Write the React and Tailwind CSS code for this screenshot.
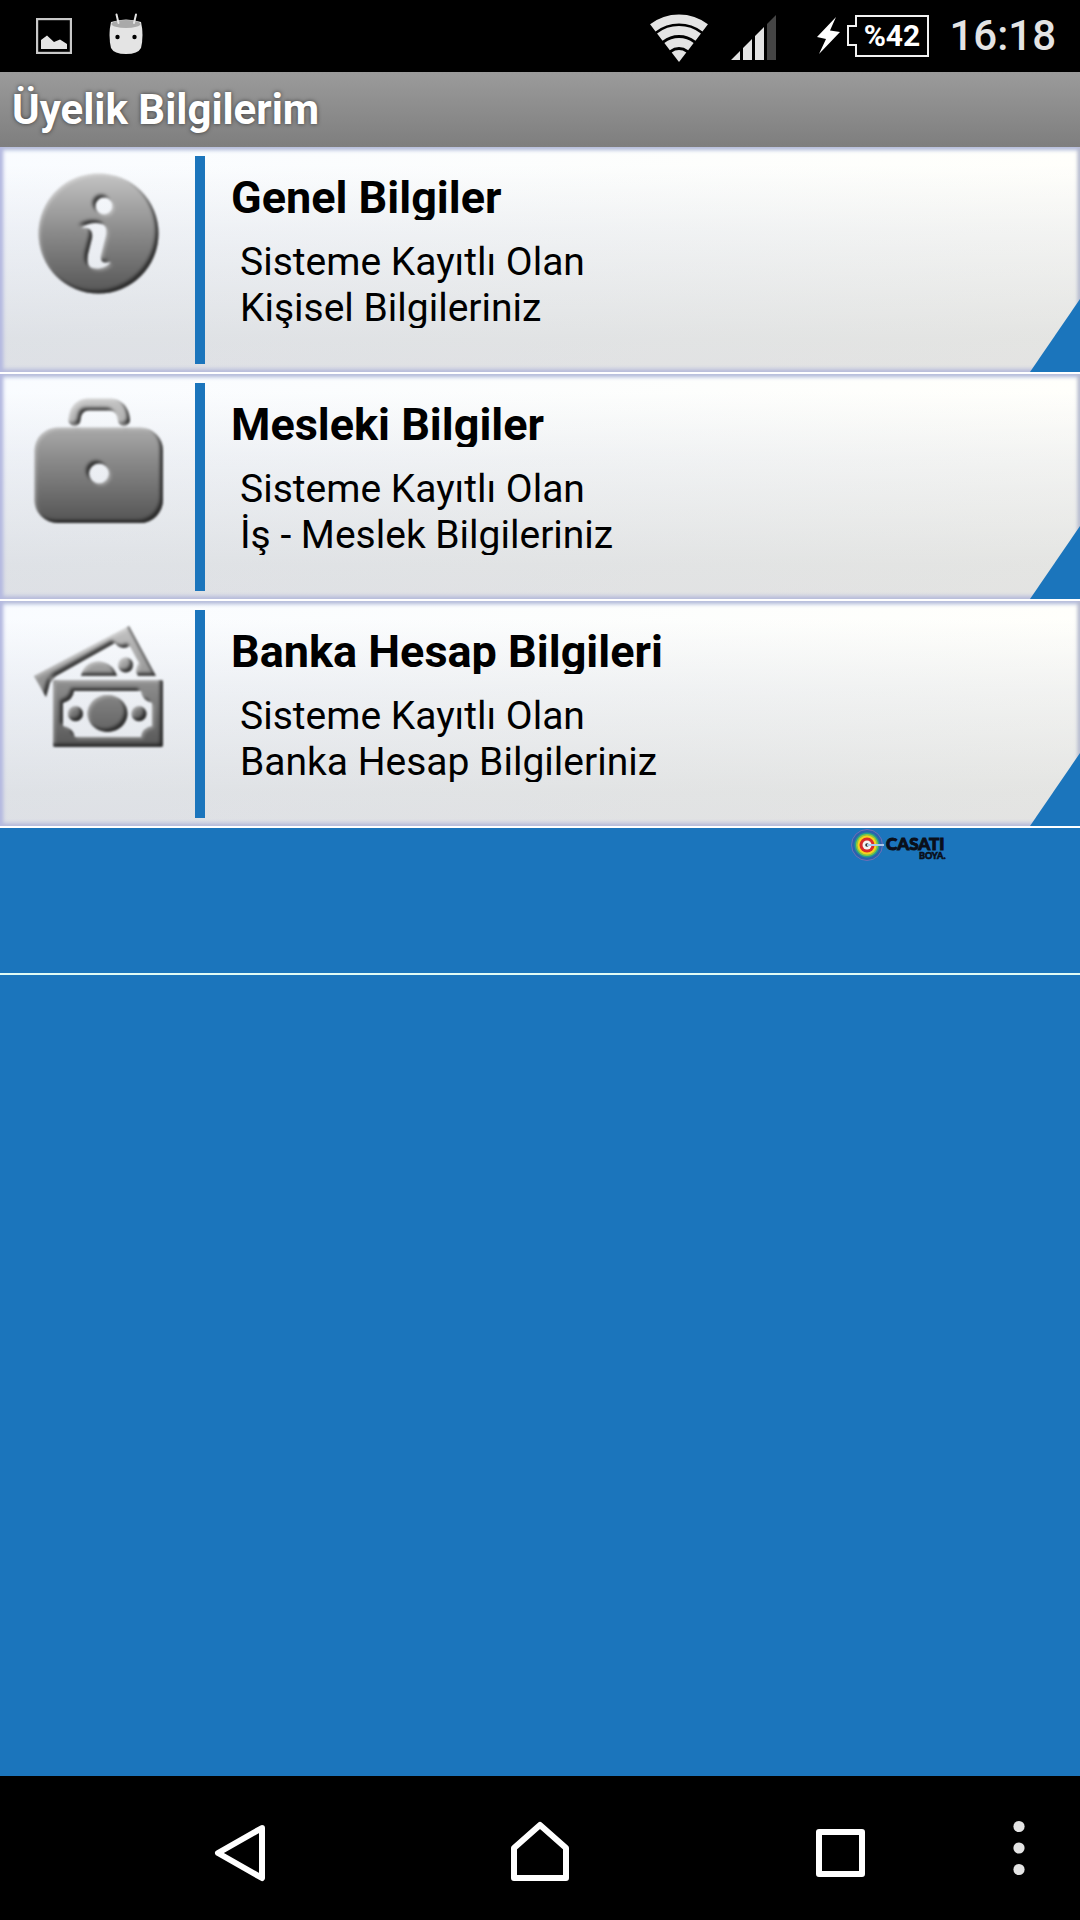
import React from 'react';

const menuItems = [
  { id: 'general', title: 'Genel Bilgiler', lines: ['Sisteme Kayıtlı Olan', 'Kişisel Bilgileriniz'], Icon: InfoIcon },
  { id: 'work', title: 'Mesleki Bilgiler', lines: ['Sisteme Kayıtlı Olan', 'İş - Meslek Bilgileriniz'], Icon: BriefcaseIcon },
  { id: 'bank', title: 'Banka Hesap Bilgileri', lines: ['Sisteme Kayıtlı Olan', 'Banka Hesap Bilgileriniz'], Icon: MoneyIcon },
];

// Shared gradient and bevel used by the three menu icons
function IconDefs() {
  return (
    <svg className="absolute h-0 w-0" aria-hidden="true">
      <defs>
        <linearGradient id="metal" gradientUnits="userSpaceOnUse" x1="0" y1="24" x2="0" y2="148">
          <stop offset="0" stopColor="#c6c6c6" />
          <stop offset="0.5" stopColor="#8a8a8a" />
          <stop offset="1" stopColor="#555555" />
        </linearGradient>
        <filter id="bevel" filterUnits="userSpaceOnUse" x="28" y="15" width="142" height="142" colorInterpolationFilters="sRGB">
          <feOffset in="SourceAlpha" dx="-3" dy="-3" />
          <feGaussianBlur stdDeviation="1.5" result="shiftUp" />
          <feComposite in="SourceAlpha" in2="shiftUp" operator="out" result="lowEdge" />
          <feFlood floodColor="#1c1c1c" floodOpacity="0.8" />
          <feComposite in2="lowEdge" operator="in" result="dark" />
          <feOffset in="SourceAlpha" dx="2" dy="2" />
          <feGaussianBlur stdDeviation="1.5" result="shiftDown" />
          <feComposite in="SourceAlpha" in2="shiftDown" operator="out" result="highEdge" />
          <feFlood floodColor="#ffffff" floodOpacity="0.3" />
          <feComposite in2="highEdge" operator="in" result="light" />
          <feMerge result="solid">
            <feMergeNode in="SourceGraphic" />
            <feMergeNode in="light" />
            <feMergeNode in="dark" />
          </feMerge>
          <feGaussianBlur in="solid" stdDeviation="0.8" />
        </filter>
      </defs>
    </svg>
  );
}

function InfoIcon() {
  return (
    <svg viewBox="28 15 142 142" className="size-[142px]" aria-hidden="true">
      <path
        filter="url(#bevel)"
        fill="url(#metal)"
        fillRule="evenodd"
        d="M98.500 26.500a60 60 0 1 0 0 120a60 60 0 1 0 0-120Z M104 50.500a8.500 8.500 0 1 1 0 17a8.500 8.500 0 1 1 0-17Z M81 81C87 76 96 75 102 77C107 79 107 84 106 89L101 109C100 115 104 117 111 115C107 121 98 123 92 121C87 119 87 113 88 107L92 91C93 84 90 80 81 81Z"
      />
    </svg>
  );
}

function BriefcaseIcon() {
  return (
    <svg viewBox="28 15 142 142" className="size-[142px]" aria-hidden="true">
      <g filter="url(#bevel)">
        <path d="M74.500 46C75 36 80 31 88 30.500H110C118 31 123 36 124 46" fill="none" stroke="url(#metal)" strokeWidth="12" strokeLinecap="round" />
        <path
          fill="url(#metal)"
          fillRule="evenodd"
          d="M58 53.500H140A23 23 0 0 1 163 77V125A23 23 0 0 1 140 149H58A23 23 0 0 1 34.500 125V77A23 23 0 0 1 58 53.500Z M99 89.500a10 10 0 1 0 0 20a10 10 0 1 0 0-20Z"
        />
      </g>
    </svg>
  );
}

function MoneyIcon() {
  return (
    <svg viewBox="28 15 142 142" className="size-[142px]" aria-hidden="true">
      <g filter="url(#bevel)" fill="url(#metal)">
        <path d="M129 25L34 75L46 96L50 82L56 75L115 42Q121 50 130 45L139 62Q134 69 138 75H156Z" />
        <path d="M81 75Q84 61 99 60.500Q113 62 117 75Z" />
        <circle cx="125.700" cy="64" r="7.500" />
        <path
          fillRule="evenodd"
          d="M55 79H161Q163 79 163 81V144Q163 146 161 146H55Q53 146 53 144V81Q53 79 55 79Z M74 90Q73 99 63 102V125Q73 127 75 136H141Q142 127 152 125V102Q142 99 141 90Z"
        />
        <ellipse cx="107.500" cy="112.500" rx="20" ry="18.500" />
        <circle cx="75.500" cy="112.700" r="7.500" />
        <circle cx="139" cy="112.700" r="7.500" />
      </g>
    </svg>
  );
}

function StatusBar() {
  return (
    <header className="flex h-[72px] items-center bg-black pr-6 pl-9 text-[#e4e4e4]">
      <svg viewBox="0 0 36 36" className="size-9" aria-label="Ekran görüntüsü">
        <rect x="1" y="1" width="34" height="34" fill="none" stroke="#c9c9c9" strokeWidth="2.400" />
        <path d="M5 31V22L11 17.500L18 24L24 21.500L31 26V31Z" fill="#e4e4e4" />
      </svg>
      <svg viewBox="0 0 36 42" className="mb-1 ml-9 h-[42px] w-9" aria-label="Android">
        <path d="M3 9Q18 4 33 9Q36 22 33 35Q30 41 18 41Q6 41 3 35Q0 22 3 9Z" fill="#e4e4e4" />
        <ellipse cx="18" cy="11" rx="14.500" ry="4" fill="#a9a9a9" />
        <path d="M8.500 1.500L10.500 10M28 1.500L26 10" stroke="#e4e4e4" strokeWidth="2" strokeLinecap="round" />
        <circle cx="9.500" cy="24" r="2.200" fill="#000" />
        <circle cx="26.500" cy="24" r="2.200" fill="#000" />
      </svg>
      <div className="ml-auto flex items-center">
        <svg viewBox="-30 -48 60 48" className="mt-1 h-12 w-[60px]" aria-label="Wi-Fi">
          <g fill="none" stroke="#e4e4e4" strokeWidth="9">
            <path d="M-26.200-34.100A43 43 0 0 1 26.200-34.100" />
            <path d="M-19.200-24.900A31.500 31.500 0 0 1 19.200-24.900" />
            <path d="M-11.900-15.400A19.500 19.500 0 0 1 11.900-15.400" />
          </g>
          <path d="M0 0L-7.300-9.500A12 12 0 0 1 7.300-9.500Z" fill="#e4e4e4" />
        </svg>
        <svg viewBox="0 0 46 46" className="mt-1 ml-[22px] size-[46px]" aria-label="Mobil sinyal">
          <path d="M0 45L9 36V45ZM12 45V33L21 24V45ZM24 45V21L33 12V45Z" fill="#e4e4e4" />
          <path d="M36 45V9L45 0V45Z" fill="#454545" />
        </svg>
        <svg viewBox="0 0 24 38" className="ml-10 h-[38px] w-6" aria-label="Şarj oluyor">
          <path d="M19 0L0 20L9 22L2 37L23 15L13 13.500Z" fill="#fff" />
        </svg>
        <svg viewBox="0 0 84 44" className="ml-[6px] h-11 w-[84px]" role="img" aria-label="%42">
          <path d="M9 2H81V42H9V31H1V12H9Z" fill="none" stroke="#f2f2f2" strokeWidth="2" />
          <text x="45" y="32" textAnchor="middle" fill="#fff" className="font-['Roboto',sans-serif] text-[30px] font-bold">%42</text>
        </svg>
        <time className="ml-[18px] text-[42px] leading-[50px] font-medium">16:18</time>
      </div>
    </header>
  );
}

function MenuRow({ title, lines, Icon }) {
  return (
    <li className="border-b-2 border-white">
      <button
        type="button"
        className="relative flex w-full bg-[linear-gradient(90deg,rgba(232,242,255,0.25),rgba(255,255,240,0.25)),linear-gradient(180deg,#ffffff_8%,#eeeff2_38%,#dbdcde_85%,#dadadd)] pt-[9px] pb-2 text-left"
      >
        <span className="flex w-[195px] shrink-0 justify-center pt-[6px] pl-[2px]">
          <Icon />
        </span>
        <span className="h-52 w-[10px] shrink-0 bg-[#1b75bc]" />
        <span className="block pt-[15px] pl-[26px] text-black">
          <span className="block h-[49px] overflow-hidden text-[45px] leading-[53px] font-bold">{title}</span>
          <span className="mt-[19px] ml-[9px] block h-[89px] overflow-hidden text-[39px] leading-[46px]">
            {lines[0]}
            <br />
            {lines[1]}
          </span>
        </span>
        <span className="absolute inset-0 shadow-[inset_3px_0_4px_#b4b9e0,inset_-2px_0_4px_#b9bdcc,inset_0_3px_4px_#b9c3e0,inset_0_-3px_4px_#c0c3e0]" />
        <svg viewBox="0 0 50 73" className="absolute right-0 bottom-0 h-[73px] w-[50px]" aria-hidden="true">
          <path d="M50 0V73H0Z" fill="#1b75bc" />
        </svg>
      </button>
    </li>
  );
}

function CasatiLogo() {
  return (
    <svg viewBox="0 0 98 34" className="h-[34px] w-[98px]" role="img" aria-label="Casati Boya">
      <circle cx="17" cy="17" r="15.500" fill="#2a62ae" stroke="#6c70b8" />
      <circle cx="17" cy="17" r="12.500" fill="#26a08a" />
      <circle cx="17" cy="17" r="11" fill="#8cc63f" />
      <circle cx="17" cy="17" r="9.500" fill="#f7d21e" />
      <circle cx="17" cy="17" r="7.500" fill="#d92a2a" />
      <circle cx="17" cy="17" r="4.500" fill="#f4f4f4" />
      <circle cx="17" cy="17" r="1.800" fill="#333" />
      <path d="M17 17H34" stroke="#a9c9ea" strokeWidth="2" />
      <g fill="#0a0f1a" stroke="#0a0f1a" className="font-['Lato',sans-serif] font-black">
        <text x="36" y="22" strokeWidth="1" className="text-[17px]">CASATI</text>
        <text x="69" y="31" strokeWidth="0.600" className="text-[9px]">BOYA.</text>
      </g>
    </svg>
  );
}

function NavigationBar() {
  return (
    <nav className="grid h-36 grid-cols-[90px_1fr_1fr_1fr_90px] items-center bg-black">
      <button type="button" aria-label="Geri" className="col-start-2 justify-self-center">
        <svg viewBox="0 0 60 72" className="h-[72px] w-[60px]">
          <path d="M52 16L8 41L52 66Z" fill="none" stroke="#fff" strokeWidth="6" strokeLinejoin="round" />
        </svg>
      </button>
      <button type="button" aria-label="Ana ekran" className="justify-self-center">
        <svg viewBox="0 0 60 72" className="h-[72px] w-[60px]">
          <path d="M30 13L56 36V66H4V36Z" fill="none" stroke="#fff" strokeWidth="6" strokeLinejoin="round" />
        </svg>
      </button>
      <button type="button" aria-label="Son uygulamalar" className="justify-self-center">
        <svg viewBox="0 0 60 72" className="h-[72px] w-[60px]">
          <rect x="9" y="20" width="43" height="42" fill="none" stroke="#fff" strokeWidth="6" strokeLinejoin="round" />
        </svg>
      </button>
      <button type="button" aria-label="Menü" className="pl-[23px]">
        <svg viewBox="0 0 12 72" className="h-[72px] w-3">
          <g fill="#e4e4e4">
            <circle cx="6" cy="14.500" r="5.600" />
            <circle cx="6" cy="36" r="5.600" />
            <circle cx="6" cy="57.500" r="5.600" />
          </g>
        </svg>
      </button>
    </nav>
  );
}

const App = () => {
  return (
    <div className="flex min-h-screen flex-col bg-[#1b75bc] font-['Roboto',sans-serif]">
      <IconDefs />
      <StatusBar />
      <div className="bg-linear-to-b from-[#9b9b9b] to-[#7e7e7e] px-3 pt-[13px] pb-3">
        <h1 className="text-[42px] leading-[50px] font-bold text-white [text-shadow:0_0_4px_rgba(0,0,0,0.6)]">Üyelik Bilgilerim</h1>
      </div>
      <main className="flex-1">
        <ul>
          {menuItems.map((item) => (
            <MenuRow key={item.id} title={item.title} lines={item.lines} Icon={item.Icon} />
          ))}
        </ul>
        <div className="flex h-[147px] justify-end border-b-2 border-[#e0fbf5] pr-[132px]">
          <CasatiLogo />
        </div>
      </main>
      <NavigationBar />
    </div>
  );
};

export default App;
